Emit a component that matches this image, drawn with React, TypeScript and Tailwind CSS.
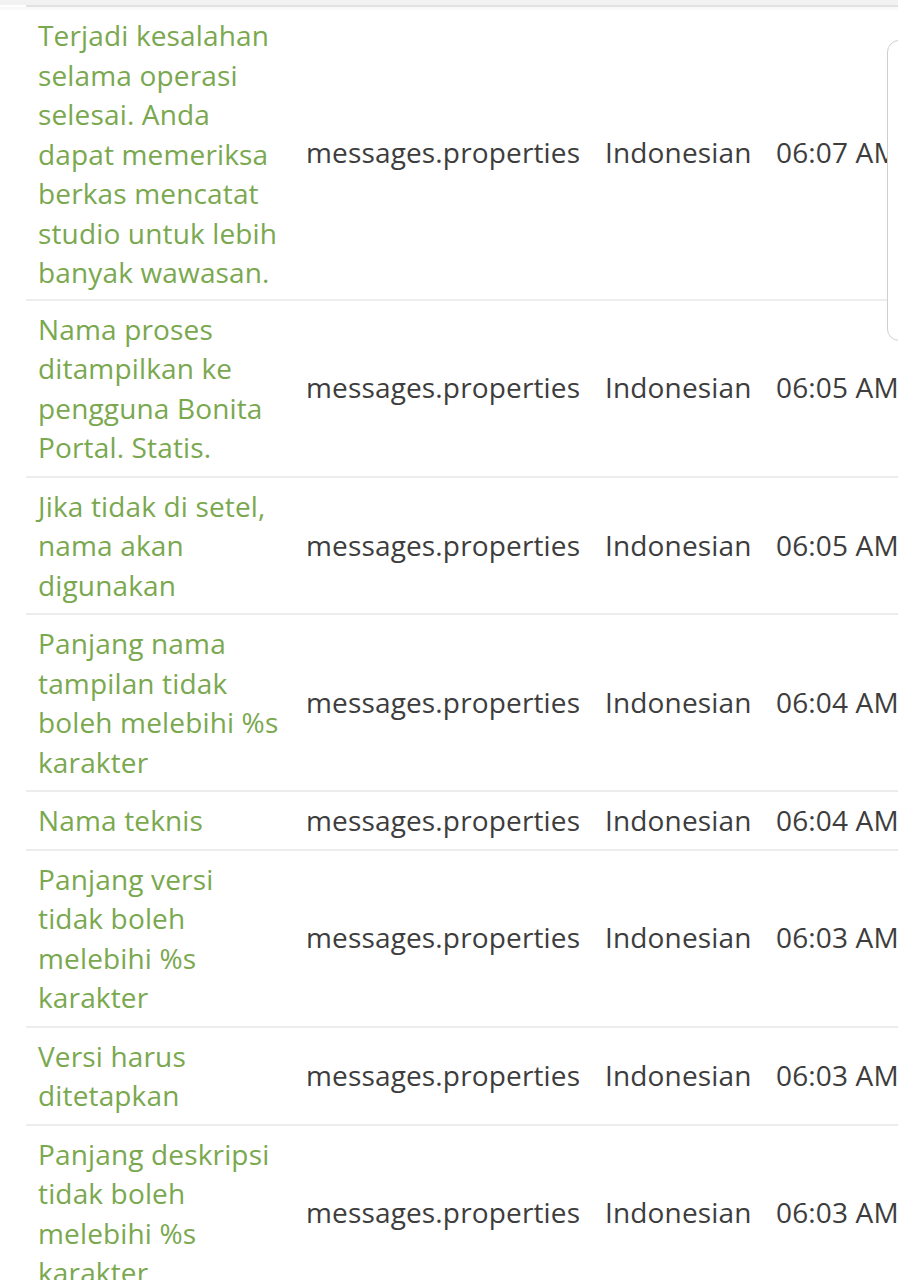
import React from "react";

type Row = { text: string[]; file: string; lang: string; time: string };

// baris terjemahan, teks dipecah per baris seperti di layar
const rows: Row[] = [
  {
    text: [
      "Terjadi kesalahan",
      "selama operasi",
      "selesai. Anda",
      "dapat memeriksa",
      "berkas mencatat",
      "studio untuk lebih",
      "banyak wawasan.",
    ],
    file: "messages.properties",
    lang: "Indonesian",
    time: "06:07 AM",
  },
  {
    text: ["Nama proses", "ditampilkan ke", "pengguna Bonita", "Portal. Statis."],
    file: "messages.properties",
    lang: "Indonesian",
    time: "06:05 AM",
  },
  {
    text: ["Jika tidak di setel,", "nama akan", "digunakan"],
    file: "messages.properties",
    lang: "Indonesian",
    time: "06:05 AM",
  },
  {
    text: ["Panjang nama", "tampilan tidak", "boleh melebihi %s", "karakter"],
    file: "messages.properties",
    lang: "Indonesian",
    time: "06:04 AM",
  },
  {
    text: ["Nama teknis"],
    file: "messages.properties",
    lang: "Indonesian",
    time: "06:04 AM",
  },
  {
    text: ["Panjang versi", "tidak boleh", "melebihi %s", "karakter"],
    file: "messages.properties",
    lang: "Indonesian",
    time: "06:03 AM",
  },
  {
    text: ["Versi harus", "ditetapkan"],
    file: "messages.properties",
    lang: "Indonesian",
    time: "06:03 AM",
  },
  {
    text: ["Panjang deskripsi", "tidak boleh", "melebihi %s", "karakter"],
    file: "messages.properties",
    lang: "Indonesian",
    time: "06:03 AM",
  },
];

export default function App() {
  return (
    <div
      className="relative h-[1280px] w-[898px] overflow-hidden bg-white text-[28px] leading-[39.5px] tracking-[0.15px]"
      style={{ fontFamily: '"Open Sans", "Noto Sans", sans-serif' }}
    >
      {/* bayangan header */}
      <div className="h-[5px] bg-[#f2f2f2]" />
      <div className="ml-[26px] h-[2px] bg-[#e2e2e2]" />
      <div className="h-[4px] bg-gradient-to-b from-[#f7f7f7] to-white" />

      <div className="-mt-[4px] ml-[26px] w-[1000px]">
        <table className="w-[1000px] table-fixed border-collapse">
          <colgroup>
            <col className="w-[268px]" />
            <col className="w-[299px]" />
            <col className="w-[171px]" />
            <col />
          </colgroup>
          <tbody>
            {rows.map((r, i) => (
              <tr key={i} className="border-b-2 border-[#ededed]">
                <td
                  className={
                    i === 0
                      ? "pb-[6px] pl-[12px] pr-[6px] pt-[9px] align-middle text-[#7aa84f]"
                      : "pb-[8px] pl-[12px] pr-[6px] pt-[9px] align-middle text-[#7aa84f]"
                  }
                >
                  {r.text.map((t, j) => (
                    <div key={j} className="whitespace-nowrap">
                      {t}
                    </div>
                  ))}
                </td>
                <td className="whitespace-nowrap px-[12px] align-middle text-[#3d3d3d]">
                  {r.file}
                </td>
                <td className="whitespace-nowrap px-[12px] align-middle text-[#3d3d3d]">
                  {r.lang}
                </td>
                <td className="whitespace-nowrap px-[12px] align-middle text-[#3d3d3d]">
                  {r.time}
                </td>
              </tr>
            ))}
          </tbody>
        </table>
      </div>

      {/* panel samping yang menumpuk di kanan */}
      <div className="absolute left-[887px] top-[40px] h-[301px] w-[40px] rounded-[12px] border border-[#cfcfcf] bg-white" />
    </div>
  );
}
